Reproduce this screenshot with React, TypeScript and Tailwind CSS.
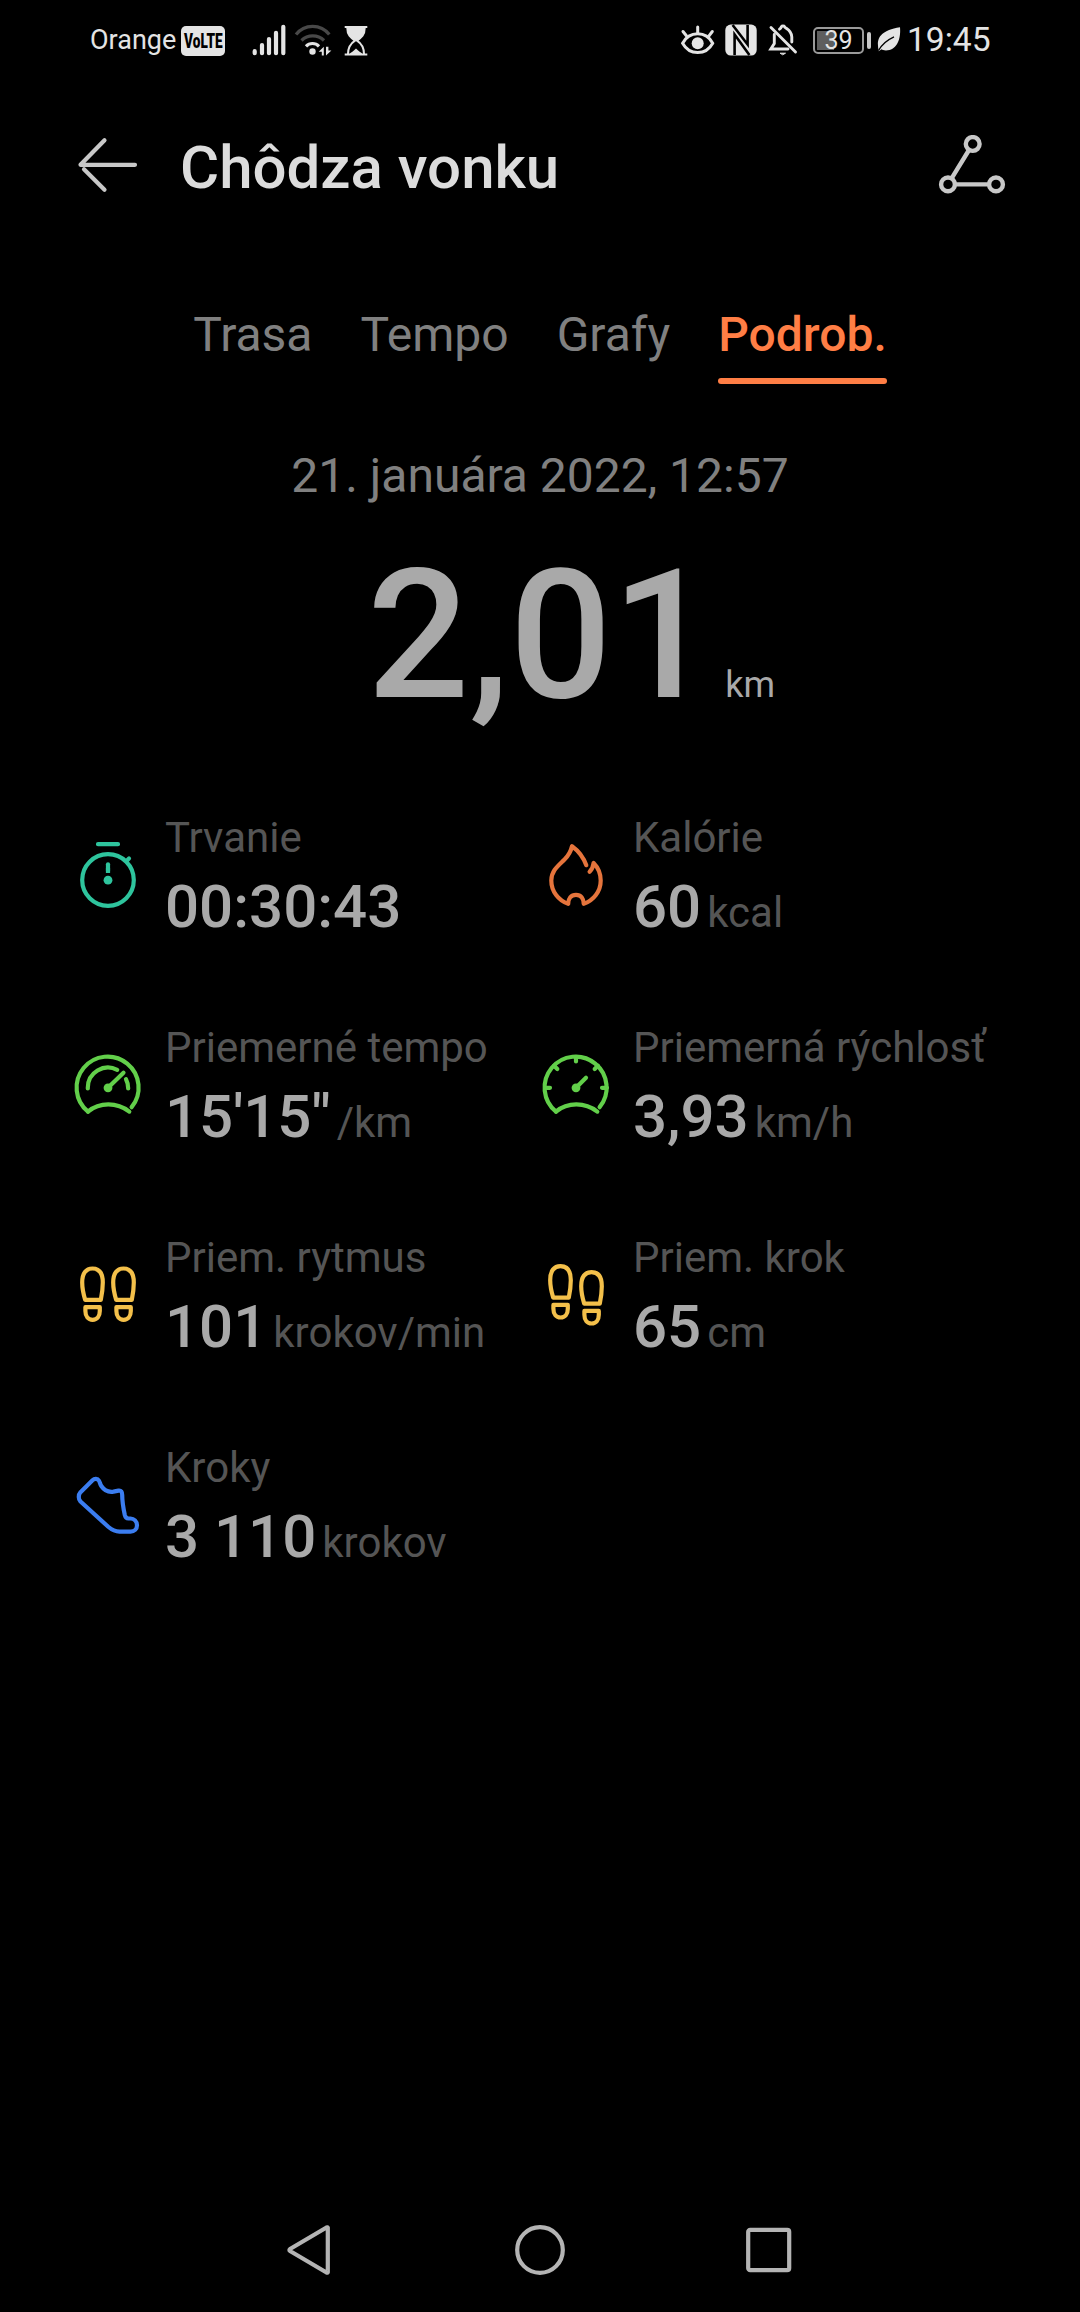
import type { ReactNode } from "react";

const TABS = ["Trasa", "Tempo", "Grafy", "Podrob."];
const ACTIVE_TAB = "Podrob.";

/* ---------- status bar icons ---------- */

function SignalIcon() {
  return (
    <svg width="34" height="32" viewBox="0 0 34 32" stroke="#e4e4e4" strokeWidth="4.2" strokeLinecap="round">
      <path d="M2.7 27.2v2M10 21v8.2M17 15v14.2M24 8.8v20.4M31.3 2.8v26.4" />
    </svg>
  );
}

function WifiIcon() {
  return (
    <svg width="38" height="32" viewBox="0 0 38 32" fill="none" strokeWidth="3.2">
      <path d="M2 10.5A21 21 0 0 1 35.3 10.5M7.5 16.5A16 16 0 0 1 30 16.5" stroke="#484848" />
      <path d="M12 22.3A9 9 0 0 1 25 22.3" stroke="#e4e4e4" />
      <circle cx="18.5" cy="27.5" r="3.2" fill="#e4e4e4" />
      <path d="M24.7 27.7L29.8 22.8V31.5L27.8 31.5V27.7ZM32 22.8V31.5L37.4 26.5H34.4V22.8Z" fill="#e4e4e4" />
    </svg>
  );
}

function HourglassIcon() {
  return (
    <svg width="24" height="32" viewBox="0 0 24 32" fill="none" stroke="#e4e4e4" strokeWidth="2">
      <path d="M0.7 3H23.3M0.7 30.6H23.3" />
      <path d="M3.3 4C3.3 11 6.5 13.5 11 16.6C6.5 19.5 4 23 4 30M20.7 4C20.7 11 17.5 13.5 13 16.6C17.5 19.5 20 23 20 30" />
      <path d="M3 4H21C20.5 11 17 13.5 12 17C7 13.5 3.5 11 3 4Z" fill="#e4e4e4" stroke="none" />
      <path d="M5.5 30C7 28 9.5 27.5 12 24.5C14.5 27.5 17 28 18.5 30Z" fill="#e4e4e4" stroke="none" />
    </svg>
  );
}

function EyeIcon() {
  return (
    <svg width="35" height="32" viewBox="0 0 35 32" fill="none" stroke="#e4e4e4" strokeWidth="3" strokeLinecap="round">
      <path d="M2.6 19.3C6 13 11 9.8 17.7 9.8S29.4 13 32.7 19.3C29.4 25.4 24.4 28.6 17.7 28.6S6 25.4 2.6 19.3Z" />
      <circle cx="17.7" cy="19.2" r="6" fill="#e4e4e4" stroke="none" />
      <path d="M17.7 3V9M3 7.5L6.4 11.8M32.3 7.5L29 11.8" />
    </svg>
  );
}

function NfcIcon() {
  return (
    <svg width="32" height="32" viewBox="0 0 32 32">
      <rect x="0.3" y="0.6" width="31.4" height="31" rx="5.5" fill="#e4e4e4" />
      <path d="M7.6 1L22.6 20.5V1M9.6 31V10.5L24.4 31" fill="none" stroke="#000" strokeWidth="2.6" />
    </svg>
  );
}

function BellOffIcon() {
  return (
    <svg width="30" height="32" viewBox="0 0 30 32" fill="none" stroke="#e4e4e4" strokeWidth="2.9" strokeLinecap="round">
      <path d="M3 3.5L27.5 28" />
      <path d="M11.5 5.2C12.6 4.4 13 4 13.3 2.8C14 1.8 16 1.8 16.6 2.8C16.9 4.4 23.5 5.5 23.8 13V18" />
      <path d="M6.3 10.5V19.5L2.8 25H20" />
      <path d="M12.5 29.2H17.5L15 30.6Z" fill="#e4e4e4" strokeWidth="1" />
    </svg>
  );
}

function LeafIcon() {
  return (
    <svg width="24" height="32" viewBox="0 0 24 32">
      <path d="M23 3.3C24 14 20.5 26.5 9 26.5C6.5 26.5 5.5 26 4.5 25.3L1.8 27.3C-0.5 17 0 7 23 3.3Z" fill="#e4e4e4" />
      <path d="M1.5 26.5C5 20 10 16 17 12.8" fill="none" stroke="#000" strokeWidth="1.3" />
    </svg>
  );
}

function Battery({ level }: { level: number }) {
  return (
    <div className="flex items-center gap-[3px]">
      <div className="relative h-[27px] w-[51px] rounded-[5px] border-2 border-[#9a9a9a] p-[2px]">
        <div className="h-full bg-[#5e5e5e]" style={{ width: `${level}%` }} />
        <span className="absolute inset-0 text-center text-[25px] leading-[23px] text-[#e4e4e4]">{level}</span>
      </div>
      <div className="h-[17px] w-1 rounded-sm bg-[#c8c8c8]" />
    </div>
  );
}

/* ---------- workout metric icons ---------- */

function MetricSvg({ color, children }: { color: string; children: ReactNode }) {
  return (
    <svg
      className="shrink-0"
      width="72"
      height="72"
      viewBox="0 0 72 72"
      fill="none"
      stroke={color}
      strokeWidth="4.2"
      strokeLinecap="round"
      strokeLinejoin="round"
    >
      {children}
    </svg>
  );
}

function StopwatchIcon() {
  return (
    <MetricSvg color="#2ec49d">
      <path d="M26 2.2H46M54.5 19L57 16.5" />
      <circle cx="36" cy="38" r="25.8" />
      <path d="M36 22.3V29" />
      <path d="M36 26V31" strokeLinecap="butt" />
      <circle cx="36" cy="38.2" r="4.4" fill="#2ec49d" stroke="none" />
    </MetricSvg>
  );
}

function FlameIcon() {
  return (
    <MetricSvg color="#e5743c">
      <path d="M46.3 23.2C43.5 15.5 38 8.5 32 4.2C30.8 9.5 28.5 13.5 24.5 17.5C18.5 23.5 11.3 28.5 11.3 38.5C11.3 49.5 18.5 58.5 28.2 61.8C28.2 56.5 31 52.8 36 52.8S43.7 56.5 43.7 61.8C53.5 58.5 60.7 49.5 60.7 38.5C60.7 31.5 58 25.5 53.6 21C53.2 24.5 52 27.5 49.6 29.8" />
    </MetricSvg>
  );
}

function PaceIcon() {
  return (
    <MetricSvg color="#62cf4a">
      <path d="M16 59.6A31 31 0 1 1 59.6 55.2" />
      <path d="M16 59.6C27.5 50 45 50 57.3 59.6" />
      <path d="M15.8 36.4V35.7A20.2 20.2 0 0 1 45.2 17.8" />
      <path d="M54 27.2C55.5 30 56.2 33 56.2 36.4" />
      <path d="M36 35.8L51.5 20.8" />
      <circle cx="36" cy="35.8" r="4.4" fill="#62cf4a" stroke="none" />
    </MetricSvg>
  );
}

function SpeedIcon() {
  return (
    <MetricSvg color="#62cf4a">
      <path d="M16 59.6A31 31 0 1 1 59.6 55.2" />
      <path d="M16 59.6C27.5 50 45 50 57.3 59.6" />
      <path d="M36 5V9.5M5 35.8H10M67 35.8H62M14 13.8L17.3 17.1M58 13.8L54.7 17.1" />
      <path d="M36 35.8L46 25.8" />
      <circle cx="36" cy="35.8" r="4.4" fill="#62cf4a" stroke="none" />
    </MetricSvg>
  );
}

function Footprint({ x, y }: { x: number; y: number }) {
  return (
    <g transform={`translate(${x} ${y})`}>
      <path d="M13.2 37.9C11.4 32 10.2 27.5 10.2 20.5C10.2 11 14 6.5 20.5 6.5S30.8 11 30.8 20.5C30.8 27.5 29.9 32.5 28.8 37.9Z" />
      <path d="M13.4 45.2H27.8V49C27.8 54.5 25 57.8 20.6 57.8S13.4 54.5 13.4 49Z" />
    </g>
  );
}

function CadenceIcon() {
  return (
    <MetricSvg color="#f4c04a">
      <Footprint x={0} y={0} />
      <Footprint x={31} y={0} />
    </MetricSvg>
  );
}

function StrideIcon() {
  return (
    <MetricSvg color="#f4c04a">
      <Footprint x={0} y={-2.3} />
      <Footprint x={31} y={3.7} />
    </MetricSvg>
  );
}

function ShoeIcon() {
  return (
    <MetricSvg color="#3b7df0">
      <path d="M20.5 8.2L8.5 20.2C6.2 22.8 6.2 27 8.5 29.5L36.5 55C40 58 43 59.6 47.5 59.6H58.5C62.3 59.6 65 56.8 65 53.2C65 49.3 62 46.5 58.5 46.5H56.5C54 46.3 53.3 45 52.8 43C51.3 36 50.2 30 50.2 23C50.2 20 49.2 18.2 46.5 18.6L41.5 19.6C36.5 20.4 32 18 29.3 14C28 12 28 10.5 27 8.8C25.5 6.3 22.5 6.3 20.5 8.2Z" />
    </MetricSvg>
  );
}

const METRICS = [
  { label: "Trvanie", value: "00:30:43", unit: "", Icon: StopwatchIcon },
  { label: "Kalórie", value: "60", unit: "kcal", Icon: FlameIcon },
  { label: "Priemerné tempo", value: "15'15\"", unit: "/km", Icon: PaceIcon },
  { label: "Priemerná rýchlosť", value: "3,93", unit: "km/h", Icon: SpeedIcon },
  { label: "Priem. rytmus", value: "101", unit: "krokov/min", Icon: CadenceIcon },
  { label: "Priem. krok", value: "65", unit: "cm", Icon: StrideIcon },
  { label: "Kroky", value: "3 110", unit: "krokov", Icon: ShoeIcon },
];

function StatusBar() {
  return (
    <div className="flex h-20 items-center justify-between pr-[89px] pl-[90px] text-[#e4e4e4]">
      <div className="flex items-center">
        <span className="w-[91px] text-[27px] leading-[82px]">Orange</span>
        <span className="mt-0.5 flex h-[30px] w-11 items-center justify-center rounded-[5px] bg-[#e4e4e4] text-black">
          <span className="scale-x-[.68] text-[20px] leading-none font-black">VoLTE</span>
        </span>
        <div className="ml-[27px] flex items-center">
          <SignalIcon />
          <div className="ml-2"><WifiIcon /></div>
          <div className="ml-3"><HourglassIcon /></div>
        </div>
      </div>
      <div className="flex items-center">
        <EyeIcon />
        <div className="ml-2.5"><NfcIcon /></div>
        <div className="ml-[11px]"><BellOffIcon /></div>
        <div className="ml-[15px]"><Battery level={39} /></div>
        <div className="ml-[6px]"><LeafIcon /></div>
        <span className="ml-[6px] w-[84px] text-[33.6px] leading-[82px]">19:45</span>
      </div>
    </div>
  );
}

function Header() {
  return (
    <header className="flex h-[170px] items-center pr-[70px] pl-[76px]">
      <svg width="64" height="60" viewBox="0 0 64 60" fill="none" stroke="#c8c8c8" strokeWidth="4.2" strokeLinecap="round">
        <path d="M59 29.8H4.5L28.5 5.2" strokeLinejoin="round" />
        <path d="M28.5 54.8L8 34.2" />
      </svg>
      <h1 className="ml-10 pt-[5px] text-[60px] leading-[80px] font-medium text-[#dcdcdc]">Chôdza vonku</h1>
      <svg className="ml-auto" width="72" height="60" viewBox="0 0 72 60" fill="none" stroke="#c8c8c8" strokeWidth="4.4">
        <circle cx="34.7" cy="9" r="6.9" />
        <circle cx="10" cy="49.4" r="6.9" />
        <circle cx="58" cy="49.4" r="6.9" />
        <path d="M31 15L13.6 43.4M17 49.4H51" />
      </svg>
    </header>
  );
}

export default function App() {
  return (
    <div className="flex h-[2312px] w-[1080px] flex-col bg-black font-['Roboto',sans-serif]">
      <StatusBar />
      <Header />

      <nav className="mt-[55px] flex justify-center gap-12 text-[48px] leading-[60px]">
        {TABS.map((tab) =>
          tab === ACTIVE_TAB ? (
            <div key={tab} className="font-medium text-[#ff7e45]">
              {tab}
              <div className="mt-[13px] h-1.5 rounded-full bg-[#ff7e45]" />
            </div>
          ) : (
            <div key={tab} className="text-[#808080]">{tab}</div>
          ),
        )}
      </nav>

      <p className="mt-[62px] text-center text-[48px] leading-[60px] text-[#808080]">21. januára 2022, 12:57</p>

      <div className="mt-[30px] flex items-baseline pl-[367px] text-[#a9a9a9]">
        <span className="text-[180px] leading-[200px] font-medium">2,01</span>
        <span className="ml-[11px] text-[36px]">km</span>
      </div>

      <section className="mt-[77px] grid grid-cols-[468px_468px] gap-y-20 pl-[72px]">
        {METRICS.map(({ label, value, unit, Icon }) => (
          <div key={label} className="flex h-[130px] items-center gap-[21px] whitespace-nowrap">
            <Icon />
            <div>
              <div className="text-[42px] leading-[50px] text-[#555555]">{label}</div>
              <div className="mt-2 flex items-baseline gap-[6px]">
                <span className="text-[60px] leading-[72px] font-medium text-[#a9a9a9]">{value}</span>
                {unit && <span className="text-[42px] leading-none text-[#555555]">{unit}</span>}
              </div>
            </div>
          </div>
        ))}
      </section>

      {/* system navigation */}
      <footer className="mt-auto flex h-[124px] items-center justify-center gap-[179px]">
        <svg width="50" height="52" viewBox="0 0 50 52" fill="none" stroke="#b4b4b4" strokeWidth="4.2" strokeLinejoin="round">
          <path d="M41.8 3.8V48.2Q41.5 49 40.5 48.5L4 27Q2.8 26 4 25L40.5 3.5Q41.5 3 41.8 3.8Z" />
        </svg>
        <svg width="50" height="52" viewBox="0 0 50 52" fill="none" stroke="#b4b4b4" strokeWidth="4.2">
          <circle cx="25" cy="26" r="22.8" />
        </svg>
        <svg width="50" height="52" viewBox="0 0 50 52" fill="none" stroke="#b4b4b4" strokeWidth="4.2">
          <rect x="4.2" y="5.8" width="41" height="40.4" rx="2" />
        </svg>
      </footer>
    </div>
  );
}
